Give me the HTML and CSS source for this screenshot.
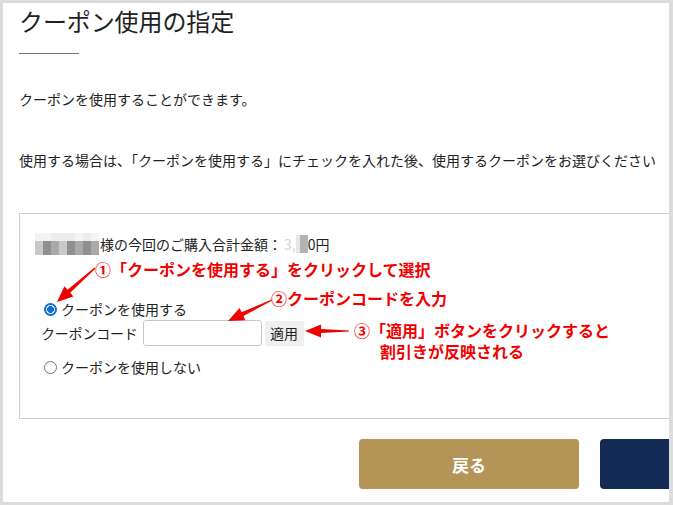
FILE: index.html
```html
<!DOCTYPE html>
<html lang="ja">
<head>
<meta charset="utf-8">
<title>クーポン使用の指定</title>
<link rel="stylesheet" href="styles.css">
</head>
<body>
<div class="page">
  <h1 class="title">クーポン使用の指定</h1>
  <div class="rule"></div>
  <p class="text first">クーポンを使用することができます。</p>
  <p class="text second">使用する場合は、「クーポンを使用する」にチェックを入れた後、使用するクーポンをお選びください</p>

  <div class="box">
    <div class="total">
      <span class="mosaic">
        <span class="cell c0"></span><span class="cell c0"></span><span class="cell c1"></span><span class="cell c1"></span><span class="cell c1"></span><span class="cell c0"></span><span class="cell c1"></span><span class="cell c0"></span>
        <span class="cell c2"></span><span class="cell c3"></span><span class="cell c4"></span><span class="cell c2"></span><span class="cell c3"></span><span class="cell c4"></span><span class="cell c3"></span><span class="cell c4"></span>
        <span class="cell c2"></span><span class="cell c3"></span><span class="cell c4"></span><span class="cell c2"></span><span class="cell c3"></span><span class="cell c4"></span><span class="cell c3"></span><span class="cell c4"></span>
      </span>様の今回のご購入合計金額：<span class="faint">3,</span><span class="amount-mosaic"></span>0円
    </div>
    <label class="option use"><span class="radio checked"></span>クーポンを使用する</label>
    <div class="code-row">
      <span class="code-label">クーポンコード</span>
      <span class="code-input"></span>
      <span class="apply">適用</span>
    </div>
    <label class="option nouse"><span class="radio"></span>クーポンを使用しない</label>
  </div>

  <div class="actions">
    <button class="btn back">戻る</button>
    <button class="btn next"></button>
  </div>
</div>

<div class="note n1">①「クーポンを使用する」をクリックして選択</div>
<div class="note n2">②クーポンコードを入力</div>
<div class="note n3">③「適用」ボタンをクリックすると</div>
<div class="note n4">割引きが反映される</div>

<svg class="arrows" viewBox="0 0 673 505" width="673" height="505" aria-hidden="true">
  <polygon points="95.5,268.5 70.2,292.8 73.4,296.4 57,302 64.4,286.3 67.6,289.8 94.5,267.4"/>
  <polygon points="272.2,300.5 243.3,315.9 245.4,320.2 228,321 239.5,308.0 241.6,312.3 271.8,299.4"/>
  <polygon points="349,331.6 321,333 321,337.5 305,331 321,324.5 321,329 349,330.4"/>
</svg>
</body>
</html>
```

FILE: styles.css
```css
html, body {
  margin: 0;
  padding: 0;
}
body {
  background: #dcdcdc;
  width: 673px;
  height: 505px;
  position: relative;
  overflow: hidden;
  font-family: "Noto Sans CJK JP", "Noto Sans", sans-serif;
  color: #222;
}
.page {
  background: #fff;
  margin: 3px 4px 3px 3px;
  height: 499px;
  overflow: hidden;
  padding-left: 16px;
  box-sizing: border-box;
}
.title {
  margin: 5px 0 0;
  font-size: 24px;
  line-height: 26px;
  font-weight: 400;
  letter-spacing: -0.1px;
}
.rule {
  width: 60px;
  height: 1px;
  background: #777;
  margin-top: 19px;
}
.text {
  font-size: 14px;
  line-height: 20px;
  margin: 0;
  white-space: nowrap;
}
.first { margin-top: 35px; }
.second { margin-top: 41px; }
.box {
  margin-top: 43px;
  width: 720px;
  border: 1px solid #ccc;
  padding: 20px 0 41px 15px;
  box-sizing: border-box;
  font-size: 14px;
  line-height: 20px;
}
.total {
  display: flex;
  align-items: center;
  height: 20px;
  white-space: nowrap;
}
.mosaic {
  display: grid;
  grid-template-columns: repeat(8, 8px);
  grid-template-rows: 8px 7px 7px;
  width: 64px;
  height: 22px;
  margin-right: 1px;
  filter: blur(0.6px);
}
.cell { display: block; }
.c0 { background: #f4f4f4; }
.c1 { background: #ececec; }
.c2 { background: #c9c9c9; }
.c3 { background: #8f8f8f; }
.c4 { background: #a9a9a9; }
.faint { color: #d4d4d4; margin-left: 2px; }
.amount-mosaic {
  display: inline-block;
  width: 12px;
  height: 18px;
  background: linear-gradient(90deg, #e6e6e6 0 4px, #b3b3b3 4px 12px);
  filter: blur(0.6px);
}
.option {
  display: flex;
  align-items: center;
  height: 20px;
  padding-left: 9px;
}
.use { margin-top: 45px; }
.nouse { margin-top: 11px; }
.radio {
  width: 13px;
  height: 13px;
  box-sizing: border-box;
  border: 1px solid #767676;
  border-radius: 50%;
  margin-right: 4px;
  background: #fff;
}
.radio.checked {
  border: 2px solid #0f6fd6;
  background: radial-gradient(circle, #0f6fd6 0 3.2px, #fff 3.7px);
}
.code-row {
  display: flex;
  align-items: center;
  margin-top: 1px;
  padding-left: 6px;
  height: 26px;
}
.code-label { margin-right: 5px; letter-spacing: -0.2px; }
.code-input {
  width: 119px;
  height: 26px;
  box-sizing: border-box;
  border: 1px solid #c8c8c8;
  border-radius: 3px;
  background: #fff;
}
.apply {
  margin-left: 3px;
  width: 39px;
  height: 25px;
  background: #efefef;
  display: flex;
  align-items: center;
  justify-content: center;
}
.actions {
  display: flex;
  gap: 21px;
  margin-top: 20px;
  margin-left: 340px;
}
.btn {
  flex: none;
  height: 50px;
  border: 0;
  border-radius: 4px;
  color: #fff;
  font-family: "Noto Sans CJK JP", "Noto Sans", sans-serif;
  font-size: 17px;
  font-weight: 700;
  padding: 0;
}
.back { width: 220px; background: #b49457; }
.next { width: 220px; background: #142a57; }
.note {
  position: absolute;
  color: #f20000;
  font-weight: 700;
  font-size: 16px;
  line-height: 19px;
  white-space: nowrap;
}
.n1 { left: 95px; top: 260px; }
.n2 { left: 271px; top: 289px; }
.n3 { left: 354px; top: 321px; }
.n4 { left: 380px; top: 342px; }
.arrows {
  position: absolute;
  left: 0;
  top: 0;
  pointer-events: none;
}
.arrows polygon { fill: #f20000; }
```
